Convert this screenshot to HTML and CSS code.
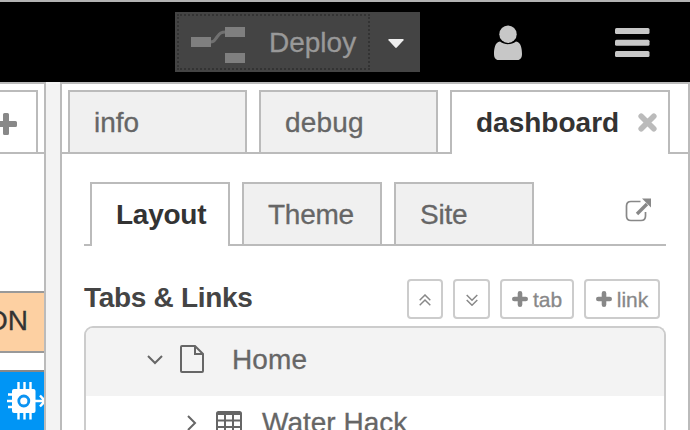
FILE: index.html
```html
<!DOCTYPE html>
<html lang="en">
<head>
<meta charset="utf-8">
<title>Flow editor</title>
<link rel="stylesheet" href="styles.css">
</head>
<body>
<header class="header">
  <div class="deploy">
    <div class="deploy-main">
      <svg class="deploy-icon" width="54" height="36" viewBox="0 0 54 36"><path d="M19 15c4 0 4-1 7-5s4-5 9-5" fill="none" stroke="#707070" stroke-width="3"/><path d="M0 10h20v10H0zM34 0h20v10H34zM34 26h20v10H34z" fill="#7f7f7f"/></svg>
      <span class="deploy-label">Deploy</span>
    </div>
    <div class="deploy-menu"><svg width="16" height="9" viewBox="0 0 16 9"><path d="M1 0h14q1 .5.5 1.2L8.8 8.6q-.8.7-1.6 0L.5 1.2Q0 .5 1 0z" fill="#eee"/></svg></div>
  </div>
  <svg class="user" width="30" height="36" viewBox="0 0 30 36"><path d="M7 16.500C2 17 1 24 1 29c0 3.500 1.500 6 4.500 6h19c3 0 4.500-2.500 4.500-6 0-5-1-12-6-12.500-5 3.500-11 3.500-16 0z" fill="#c7c7c7"/><circle cx="15" cy="9.200" r="8.700" fill="#c7c7c7"/></svg>
  <svg class="burger" width="35" height="30" viewBox="0 0 35 30" fill="#c7c7c7"><rect width="34.500" height="6" rx="1.500"/><rect y="11.800" width="34.500" height="6" rx="1.500"/><rect y="23" width="34.500" height="6" rx="1.500"/></svg>
</header>
<main class="main">
  <section class="workspace">
    <div class="ws-tabs"><div class="ws-add"><svg width="17" height="22" viewBox="5 0 17 22"><path d="M1.500 8H8V1.500Q8 0 9.500 0h3Q14 0 14 1.500V8h6.500Q22 8 22 9.500v3q0 1.500-1.500 1.500H14v6.500q0 1.500-1.500 1.500h-3Q8 22 8 20.500V14H1.500z" fill="#888"/></svg></div></div>
    <div class="node node-inject"><span>ON</span></div>
    <div class="node node-device">
      <svg width="37" height="38" viewBox="0 0 37 38" fill="none" stroke="#fff" stroke-width="2.400"><rect x="5" y="7" width="23.500" height="24" rx="2" fill="#fff" stroke="none"/><path d="M11.500 0v8M17.500 0v8M23.500 0v8M11.500 30v7.500M17.500 30v7.500M23.500 30v7.500M5 12.500H1M5 19H0M5 25H1M28 19h9M33 13.500l5 5.500-5 5.500"/><circle cx="16.800" cy="19" r="5" stroke="#0b93f2" stroke-width="2.800"/><circle cx="16.800" cy="19" r="1.500" fill="#fff" stroke="none"/></svg>
    </div>
  </section>
  <div class="separator"></div>
  <aside class="sidebar">
    <nav class="tabs">
      <div class="tab">info</div>
      <div class="tab debug">debug</div>
      <div class="tab active">dashboard<svg class="close" width="19" height="19" viewBox="0 0 19 19"><path d="M3.200 3.200l12.600 12.600M15.800 3.200L3.200 15.800" stroke="#bbb" stroke-width="5.600" stroke-linecap="round"/></svg></div>
    </nav>
    <div class="content">
      <nav class="tabs subtabs">
        <div class="tab active">Layout</div>
        <div class="tab">Theme</div>
        <div class="tab">Site</div>
        <svg class="external" width="27" height="24" viewBox="0 0 27 24"><path d="M15.500 3.500H6Q1.500 3.500 1.500 8v10q0 4.500 4.500 4.500h10q4.500 0 4.500-4.500v-4" fill="none" stroke="#888" stroke-width="1.700"/><path d="M12 16L22 6" stroke="#888" stroke-width="3.400"/><path d="M17 .5h9v9z" fill="#888"/></svg>
      </nav>
      <div class="toolbar">
        <h1>Tabs &amp; Links</h1>
        <div class="btn up"><svg width="12" height="12" viewBox="0 0 12 12"><path d="M.7 6.200L6 1l5.300 5.200M.7 11.200L6 6l5.300 5.200"/></svg></div>
        <div class="btn down"><svg width="12" height="12" viewBox="0 0 12 12"><path d="M.7 1L6 6.200 11.300 1M.7 6L6 11.200 11.300 6"/></svg></div>
        <div class="btn add-tab"><svg class="plus" width="16" height="16" viewBox="0 0 16 16"><path d="M8 2.300v11.400M2.300 8h11.400"/></svg>tab</div>
        <div class="btn add-link"><svg class="plus" width="16" height="16" viewBox="0 0 16 16"><path d="M8 2.300v11.400M2.300 8h11.400"/></svg>link</div>
      </div>
      <div class="list">
        <div class="row home">
          <svg width="16" height="10" viewBox="0 0 16 10"><path d="M1 1l7 7 7-7"/></svg>
          <svg class="file" width="24" height="28" viewBox="0 0 24 28"><path d="M2 1h13l8 8v17q0 1-1 1H2q-1 0-1-1V2q0-1 1-1zM15 1v8h8"/></svg>
          <span>Home</span>
        </div>
        <div class="row child">
          <svg width="10" height="16" viewBox="0 0 10 16"><path d="M1 1l7 7-7 7"/></svg>
          <svg class="table" width="26" height="24" viewBox="0 0 26 24"><path d="M1 3h24M1 9.500h24M1 16h24M9 2v21M17 2v21"/><rect x="1" y="1" width="24" height="22" rx="1.500"/></svg>
          <span>Water Hack</span>
        </div>
      </div>
    </div>
  </aside>
</main>
</body>
</html>
```

FILE: styles.css
```css
* { box-sizing: border-box; }
body {
  margin: 0;
  width: 690px;
  height: 430px;
  overflow: hidden;
  background: #fff;
  color: #666;
  font: 28px/62px "Liberation Sans", Arial, sans-serif;
  -webkit-text-stroke: 0.3px;
}
svg { display: block; flex: none; }
.header {
  display: flex;
  height: 82px;
  padding: 10px 0 0 175px;
  background: #000;
  border-top: 2px solid #b3b3b3;
}
.deploy {
  display: flex;
  width: 245px;
  height: 60px;
  padding: 2px;
  background: #444;
}
.deploy-main {
  display: flex;
  width: 193px;
  height: 56px;
  padding-left: 12px;
  border: 2px dotted #333;
  color: #999;
  line-height: 54px;
}
.deploy-icon { margin-top: 11px; }
.deploy-label { margin-left: 24px; }
.deploy-menu { padding: 25px 0 0 18px; }
.user { margin: 13px 0 0 73px; }
.burger { margin: 16px 0 0 92px; }
.main { display: flex; height: 348px; }
.workspace {
  width: 46px;
  overflow: hidden;
  border-top: 2px solid #bbb;
  border-right: 2px solid #bbb;
}
.ws-tabs {
  height: 70px;
  padding-top: 6px;
  border-bottom: 2px solid #bbb;
}
.ws-add {
  width: 38px;
  height: 62px;
  padding-top: 21px;
  border: solid #bbb;
  border-width: 2px 2px 0 0;
}
.node {
  border: solid #999;
  border-width: 2px 0;
}
.node-inject {
  display: flex;
  justify-content: flex-end;
  height: 62px;
  margin-top: 137px;
  padding-right: 16px;
  background: #fdd0a2;
  color: #333;
  line-height: 55px;
}
.node-device {
  height: 60px;
  margin-top: 17px;
  padding: 10px 0 0 7px;
  border-color: #888;
  border-bottom: 0;
  background: #0095f5;
}
.separator { width: 14px; background: #f3f3f3; }
.sidebar {
  width: 630px;
  border: 2px solid #bbb;
  border-bottom: 0;
}
.tabs {
  display: flex;
  gap: 12px;
  height: 70px;
  padding: 6px 0 0 6px;
  border-bottom: 2px solid #bbb;
}
.tab {
  display: flex;
  width: 179px;
  height: 62px;
  padding-left: 24px;
  background: #f0f0f0;
  border: 2px solid #bbb;
  border-bottom: 0;
}
.debug { letter-spacing: 0.2px; }
.tab.active {
  width: 220px;
  height: 64px;
  background: #fff;
  color: #333;
  font-weight: bold;
  -webkit-text-stroke: 0;
}
.close { margin: 21px 0 0 19px; }
.content { padding: 28px 22px 0; }
.subtabs { height: 64px; padding-top: 0; }
.subtabs .tab, .subtabs .tab.active { width: 140px; letter-spacing: -0.25px; }
.external { margin: 16px 0 0 79px; }
.toolbar {
  display: flex;
  height: 80px;
  padding-top: 33px;
  line-height: 37px;
}
h1 {
  width: 323px;
  margin: 0;
  color: #444;
  font-size: 28px;
  letter-spacing: -0.3px;
  -webkit-text-stroke: 0;
}
.btn {
  display: flex;
  align-items: center;
  justify-content: center;
  width: 36px;
  height: 40px;
  padding-top: 1px;
  border: 2px solid #ccc;
  border-radius: 4px;
  color: #888;
  font-size: 21px;
}
.btn svg { fill: none; stroke: #888; stroke-width: 1.5; }
.down { width: 37px; margin-left: 10px; }
.add-tab { width: 74px; margin-left: 10px; }
.add-link { width: 76px; margin-left: 10px; }
.btn .plus {
  margin: 0 5px 1px 0;
  stroke-width: 4.6;
  stroke-linecap: round;
}
.list {
  height: 104px;
  overflow: hidden;
  border: 2px solid #ccc;
  border-bottom: 0;
  border-radius: 9px 9px 0 0;
}
.row { display: flex; height: 68px; }
.row svg { fill: none; stroke: #666; stroke-width: 2; }
.home {
  padding: 1px 0 0 61px;
  background: #f3f3f3;
}
.home svg:first-child { margin-top: 26px; }
.file { margin: 16px 0 0 17px; }
.home span { margin-left: 28px; letter-spacing: 0.1px; }
.child { padding-left: 101px; }
.child span { margin-left: 20px; line-height: 54px; }
.child svg:first-child { margin-top: 19px; }
.table { margin: 15px 0 0 19px; }
```
